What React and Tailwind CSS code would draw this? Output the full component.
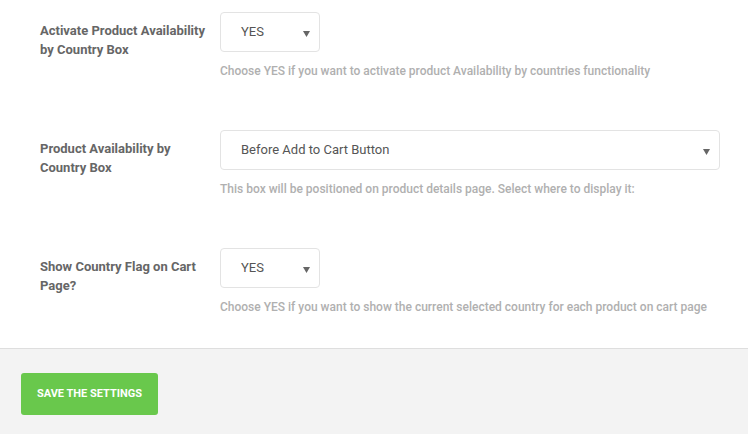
const rows = [
  {
    label: "Activate Product Availability by Country Box",
    value: "YES",
    wide: false,
    help: "Choose YES if you want to activate product Availability by countries functionality",
  },
  {
    label: "Product Availability by Country Box",
    value: "Before Add to Cart Button",
    wide: true,
    help: "This box will be positioned on product details page. Select where to display it:",
  },
  {
    label: "Show Country Flag on Cart Page?",
    value: "YES",
    wide: false,
    help: "Choose YES if you want to show the current selected country for each product on cart page",
  },
];

function FakeSelect({ value, wide }) {
  return (
    <div
      className={`relative flex items-center h-[40px] bg-white border border-[#e3e3e3] rounded-[4px] pl-[20px] text-[13px] text-[#555] ${
        wide ? "w-full" : "w-[100px]"
      }`}
    >
      <span>{value}</span>
      <svg
        className="absolute right-[9px] top-[18px]"
        width="7"
        height="6"
        viewBox="0 0 7 6"
      >
        <path d="M0 0 H7 L3.5 6 Z" fill="#666" />
      </svg>
    </div>
  );
}

export default function App() {
  return (
    <div
      className="w-[748px] min-h-[434px] bg-[#f3f3f3]"
      style={{ fontFamily: "Roboto, 'Liberation Sans', sans-serif" }}
    >
      <div className="bg-white pt-[12px] pb-[34px] border-b border-[#dedede]">
        {rows.map((row, i) => (
          <div key={i} className={`flex ${i < rows.length - 1 ? "mb-[52px]" : ""}`}>
            <div className="w-[220px] shrink-0 pl-[40px] pr-[12px] pt-[9px]">
              <p className="text-[13px] leading-[19px] font-bold text-[#666]">{row.label}</p>
            </div>
            <div className="flex-1 pr-[28px]">
              <FakeSelect value={row.value} wide={row.wide} />
              <p className="mt-[12px] text-[12px] leading-[14px] font-medium text-[#b0b0b0]">
                {row.help}
              </p>
            </div>
          </div>
        ))}
      </div>
      <div className="pt-[24px] pb-[20px] pl-[21px]">
        <button className="h-[42px] w-[137px] rounded-[3px] bg-[#69c84c] text-white text-[11px] font-bold uppercase">
          Save the settings
        </button>
      </div>
    </div>
  );
}
